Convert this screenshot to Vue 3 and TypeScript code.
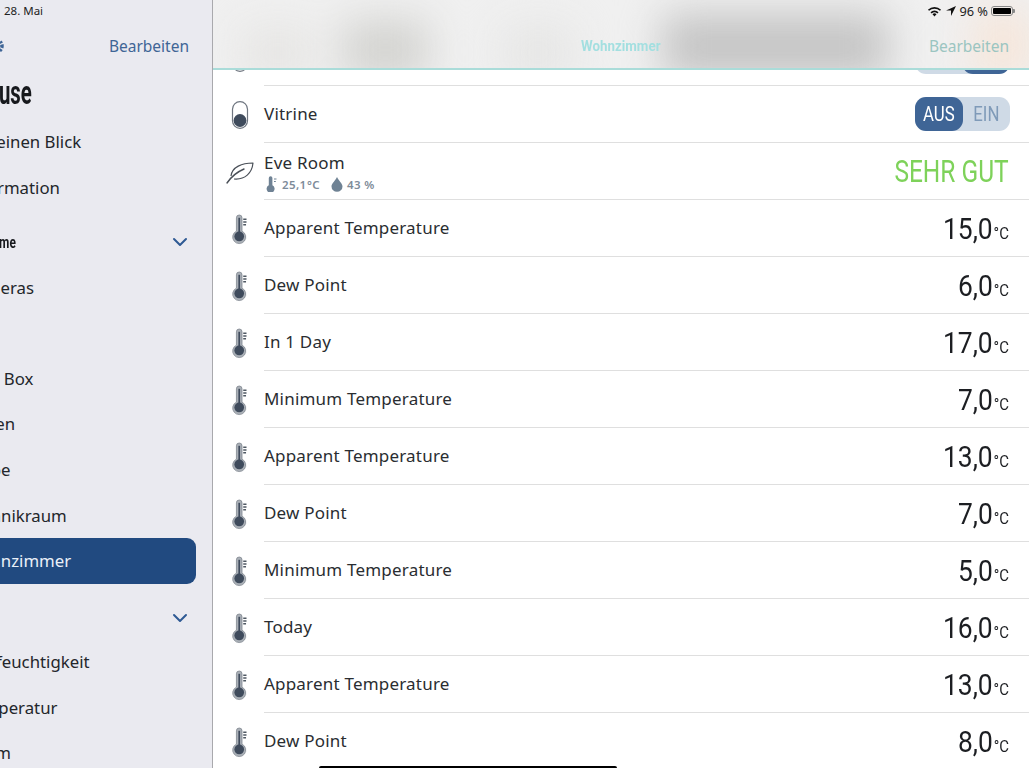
<script setup lang="ts">
interface Row { name: string; value: string }
const rows: Row[] = [
  { name: 'Apparent Temperature', value: '15,0' },
  { name: 'Dew Point', value: '6,0' },
  { name: 'In 1 Day', value: '17,0' },
  { name: 'Minimum Temperature', value: '7,0' },
  { name: 'Apparent Temperature', value: '13,0' },
  { name: 'Dew Point', value: '7,0' },
  { name: 'Minimum Temperature', value: '5,0' },
  { name: 'Today', value: '16,0' },
  { name: 'Apparent Temperature', value: '13,0' },
  { name: 'Dew Point', value: '8,0' },
]
</script>

<template>
  <div class="ipad">
    <aside class="side">
      <div class="date">28. Mai</div>
      <div class="side-nav">
        <svg class="gear" viewBox="0 0 20 20" width="20" height="20"><circle cx="10" cy="10" r="6" fill="none" stroke="#3f6596" stroke-width="3.500" stroke-dasharray="2 1.200" /></svg>
        <span class="side-edit">Bearbeiten</span>
      </div>
      <div class="side-inner">
        <h1 class="side-title"><span>House</span></h1>
        <div class="item">Auf einen Blick</div>
        <div class="item">Information</div>
        <div class="section first">
          <span class="sec-label">Home</span>
          <svg viewBox="0 0 16 10" width="16" height="10"><path d="M2 2l6 6 6-6" fill="none" stroke="#2f5a94" stroke-width="2" stroke-linecap="round" stroke-linejoin="round" /></svg>
        </div>
        <div class="item">Kameras</div>
        <div class="item">Bad</div>
        <div class="item">Post Box</div>
        <div class="item">Dielen</div>
        <div class="item">Stube</div>
        <div class="item">Technikraum</div>
        <div class="item active">Wohnzimmer</div>
        <div class="section second">
          <span class="sec-label">Typ</span>
          <svg viewBox="0 0 16 10" width="16" height="10"><path d="M2 2l6 6 6-6" fill="none" stroke="#2f5a94" stroke-width="2" stroke-linecap="round" stroke-linejoin="round" /></svg>
        </div>
        <div class="item">Luftfeuchtigkeit</div>
        <div class="item">Temperatur</div>
        <div class="item">Raum</div>
      </div>
    </aside>

    <main class="main">
      <div class="list">
        <div class="row">
          <svg class="ico" viewBox="0 0 18 28" width="18" height="28">
            <rect x="1.500" y="0.700" width="15" height="26.600" rx="7.500" fill="#fff" stroke="#6f7680" stroke-width="1.200" />
            <circle cx="9" cy="8.500" r="6.400" fill="#3f4b5c" />
          </svg>
          <div class="cell">
            <span class="name">Steckdose</span>
            <div class="switch"><span class="seg">AUS</span><span class="seg lit"><b>EIN</b></span></div>
          </div>
        </div>
        <div class="row">
          <svg class="ico" viewBox="0 0 18 28" width="18" height="28">
            <rect x="1.500" y="0.700" width="15" height="26.600" rx="7.500" fill="#fff" stroke="#6f7680" stroke-width="1.200" />
            <circle cx="9" cy="19.500" r="6.400" fill="#3f4b5c" />
          </svg>
          <div class="cell">
            <span class="name">Vitrine</span>
            <div class="switch"><span class="seg lit"><b>AUS</b></span><span class="seg"><b>EIN</b></span></div>
          </div>
        </div>
        <div class="row">
          <svg class="ico leaf" viewBox="0 0 30 26" width="30" height="26">
            <path d="M6 17C7 8 17 4 28 4c-1 10-8 17-19 16" fill="none" stroke="#4a5058" stroke-width="1.200" stroke-linejoin="round" />
            <path d="M2 24C6 18 12 13 19 10" fill="none" stroke="#4a5058" stroke-width="1.400" stroke-linecap="round" />
          </svg>
          <div class="cell">
            <div class="eve">
              <span class="name">Eve Room</span>
              <div class="sub">
                <svg viewBox="0 0 12 16" width="12" height="16">
                  <path d="M2.800 2a1.800 1.800 0 0 1 3.600 0v7.200a4 4 0 1 1-3.600 0z" fill="#6f8294" />
                  <path d="M8 3h2.500M8 5.500h1.800" stroke="#6f8294" stroke-width="1.200" />
                </svg>
                <span class="sub-t temp">25,1 °C</span>
                <svg class="drop" viewBox="0 0 12 16" width="12" height="16"><path d="M6 1C7.500 4.500 11.500 7.500 11.500 10.500a5.500 5.300 0 0 1-11 0C.5 7.500 4.500 4.500 6 1z" fill="#6f8294" /></svg>
                <span class="sub-t">43 %</span>
              </div>
            </div>
            <span class="good">SEHR GUT</span>
          </div>
        </div>
        <div v-for="(r, i) in rows" :key="i" class="row">
          <svg class="ico thermo" viewBox="0 0 18 30" width="17" height="28">
            <path d="M5.700 3a3 3 0 0 1 6 0v14.300a7 7 0 1 1-6 0z" fill="#aab0b7" stroke="#7b828b" stroke-width="0.800" />
            <rect x="7.800" y="3" width="1.800" height="16" fill="#3f4b5c" />
            <circle cx="8.700" cy="23" r="5.200" fill="#3f4b5c" />
            <path d="M13 4.500h3.500M13 7.500h3.500M13 10.500h3" stroke="#4f5863" stroke-width="1.500" />
          </svg>
          <div class="cell">
            <span class="name">{{ r.name }}</span>
            <span class="val">{{ r.value }}<small>°C</small></span>
          </div>
        </div>
      </div>

      <header class="bar">
        <div class="blobs">
          <i class="b b1"></i><i class="b b2"></i><i class="b b5"></i><i class="b b3"></i><i class="b b4"></i>
        </div>
        <span class="bar-title">Wohnzimmer</span>
        <span class="bar-edit">Bearbeiten</span>
        <div class="status">
          <svg viewBox="0 0 16 12" width="15" height="11"><path d="M8 11.500l2.200-2.600a3.200 3.200 0 0 0-4.400 0zM3.600 6.700l1.300 1.400a4.600 4.600 0 0 1 6.200 0l1.300-1.400a6.500 6.500 0 0 0-8.800 0zM.8 4l1.300 1.300a8.500 8.500 0 0 1 11.800 0L15.200 4A10.500 10.500 0 0 0 .8 4z" fill="#111" /></svg>
          <svg class="arrow" viewBox="0 0 10 10" width="10" height="10"><path d="M10 0L0 4.500h5V10z" fill="#111" /></svg>
          <span>96 %</span>
          <span class="batt"><i></i></span>
        </div>
      </header>
    </main>
    <div class="home"></div>
  </div>
</template>

<style>
html, body { margin: 0; background: #fff; }
</style>

<style scoped>
.ipad {
  position: relative;
  width: 1029px;
  height: 768px;
  display: flex;
  overflow: hidden;
  font-family: "Noto Sans", sans-serif;
  color: #23262b;
}
.side {
  position: relative;
  width: 212px;
  flex: none;
  background: #eaeaf0;
  border-right: 1px solid #a9a9ad;
  overflow: hidden;
}
.date {
  font-size: 11.500px;
  line-height: 14px;
  padding: 4px 0 0 4px;
  color: #222;
}
.side-nav {
  height: 38px;
  margin-top: 9px;
  display: flex;
  align-items: center;
  justify-content: space-between;
  padding-right: 23px;
}
.gear { margin-left: -14px; }
.side-edit {
  font-size: 15.500px;
  color: #3f6596;
}
.side-inner {
  margin-left: -51px;
  padding-top: 7px;
}
.side-title {
  margin: 0 0 0 24px;
  height: 47px;
  line-height: 40px;
  font-family: Roboto, sans-serif;
  font-size: 34px;
  font-weight: 700;
  color: #17191d;
}
.side-title span {
  display: inline-block;
  transform: scaleX(0.6);
  transform-origin: left center;
}
.item {
  width: 247px;
  height: 45.600px;
  line-height: 45.600px;
  box-sizing: border-box;
  padding-left: 16px;
  font-size: 16.800px;
  color: #23262b;
  white-space: nowrap;
  border-radius: 0 9px 9px 0;
}
.item.active {
  background: #214a80;
  color: #eaf0f8;
}
.section {
  width: 239px;
  padding-left: 35px;
  box-sizing: border-box;
  display: flex;
  align-items: center;
  justify-content: space-between;
  font-family: Roboto, sans-serif;
  font-weight: 700;
  font-size: 17px;
  color: #17191d;
}
.section.first { margin-top: 10px; height: 44.400px; }
.section.second { margin-top: 12.800px; height: 42.400px; }
.section.second .sec-label { margin-left: -6px; }
.sec-label {
  display: inline-block;
  transform: scaleX(0.7);
  transform-origin: left center;
}

.main {
  position: relative;
  flex: 1;
  min-width: 0;
  background: #fff;
  overflow: hidden;
}
.list { padding-top: 29px; }
.row {
  display: flex;
  height: 57px;
}
.ico {
  flex: none;
  margin: auto 0 auto 18px;
  overflow: visible;
}
.thermo { margin-right: 1px; }
.leaf { margin-left: 12px; margin-right: -6px; }
.cell {
  flex: 1;
  min-width: 0;
  margin-left: 15px;
  padding-right: 20px;
  padding-bottom: 2px;
  display: flex;
  align-items: center;
  justify-content: space-between;
  border-bottom: 1px solid #dfdfdf;
  box-sizing: border-box;
}
.name {
  font-size: 17px;
  letter-spacing: 0.200px;
  color: #2a2d31;
}
.val {
  display: inline-block;
  transform: scaleX(0.88);
  transform-origin: right center;
  font-family: Roboto, sans-serif;
  font-size: 30px;
  color: #1c1e22;
  margin-top: 2px;
}
.val small { font-size: 17px; margin-left: 1px; }
.good {
  display: inline-block;
  transform: scaleX(0.79);
  transform-origin: right center;
  font-family: Roboto, sans-serif;
  font-size: 31px;
  color: #7ed25a;
  margin-top: 2px;
}
.switch {
  display: flex;
  width: 95px;
  height: 34px;
  margin-top: 2px;
  margin-right: -1px;
  border-radius: 11px;
  background: #cfdae6;
  font-family: Roboto, sans-serif;
  font-size: 21px;
  line-height: 34px;
  text-align: center;
}
.seg { flex: 1; border-radius: 11px; color: #7f9ab8; }
.seg b, .seg { font-weight: 400; }
.seg b { display: inline-block; transform: scaleX(0.8); }
.seg.lit { flex: 0 0 48px; background: #3f6596; color: #fff; }
.eve { display: flex; flex-direction: column; padding-top: 4px; }
.eve .name { line-height: 22px; }
.sub {
  display: flex;
  align-items: center;
  height: 16px;
  margin: 2px 0 0 2px;
}
.drop { margin-left: 11px; margin-right: 4px; }
.sub-t {
  font-size: 11.500px;
  font-weight: 600;
  color: #7d8b99;
  letter-spacing: 0.400px;
  white-space: nowrap;
}
.temp { margin-left: 4px; word-spacing: -3px; }

.bar {
  position: absolute;
  left: 0;
  right: 0;
  top: 0;
  height: 70px;
  box-sizing: border-box;
  background: #f0f0f0;
  border-bottom: 2px solid #aadcd9;
  overflow: hidden;
}
.blobs { position: absolute; inset: -30px; filter: blur(20px); }
.b { position: absolute; display: block; }
.b1 { left: 60px; top: 58px; width: 70px; height: 50px; background: #e6e5e3; }
.b2 { left: 160px; top: 50px; width: 85px; height: 60px; background: #d3d3d0; }
.b5 { left: 320px; top: 55px; width: 70px; height: 55px; background: #e6e6e5; }
.b3 { left: 480px; top: 44px; width: 225px; height: 64px; background: #c4c4c4; }
.b4 { left: 790px; top: 40px; width: 60px; height: 70px; background: #f6e6da; }
.bar-title {
  position: absolute;
  left: 368px;
  top: 37px;
  font-family: Roboto, sans-serif;
  font-weight: 700;
  font-size: 15px;
  line-height: 18px;
  color: #a3dfe0;
  transform: scaleX(0.89);
  transform-origin: left center;
}
.bar-edit {
  position: absolute;
  right: 20px;
  top: 36px;
  font-size: 15.500px;
  line-height: 20px;
  color: #9bc5c1;
}
.status {
  position: absolute;
  right: 14px;
  top: 4px;
  display: flex;
  align-items: center;
  gap: 3px;
  height: 14px;
  font-size: 12.800px;
  color: #222;
}
.arrow { margin-left: 1px; }
.batt {
  position: relative;
  width: 22px;
  height: 10px;
  margin-right: 2px;
  box-sizing: border-box;
  border: 1px solid #888;
  border-radius: 3px;
  padding: 1px;
  display: block;
}
.batt::after {
  content: "";
  position: absolute;
  right: -3px;
  top: 2px;
  width: 2px;
  height: 4px;
  background: #888;
  border-radius: 0 1px 1px 0;
}
.batt i { display: block; height: 100%; background: #000; border-radius: 1px; }

.home {
  position: absolute;
  left: 319px;
  bottom: 0;
  width: 298px;
  height: 2px;
  background: #000;
  border-radius: 2px 2px 0 0;
}
</style>
